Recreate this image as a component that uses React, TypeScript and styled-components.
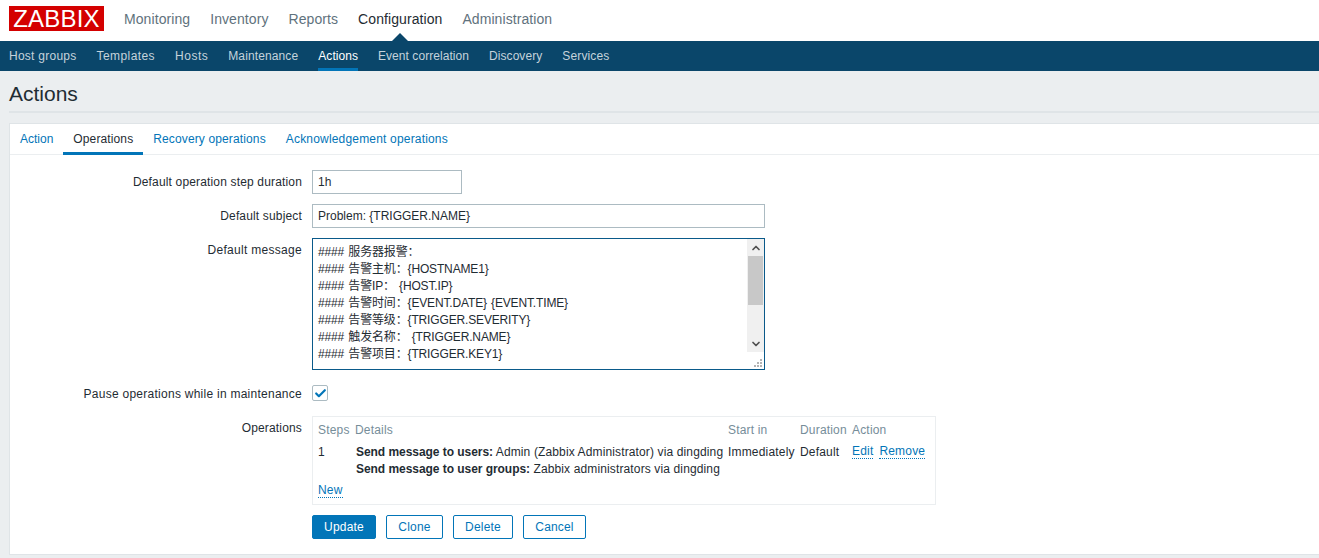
import React from 'react';
import styled, { createGlobalStyle } from 'styled-components';
import { Check, ChevronDown, ChevronUp } from 'lucide-react';

const GlobalStyle = createGlobalStyle`
  html, body {
    margin: 0;
    padding: 0;
    height: 100%;
    overflow: hidden;
    background: #ebeef0;
  }
  * {
    box-sizing: border-box;
  }
  body {
    font-family: "Liberation Sans", Arial, "Noto Sans CJK SC", sans-serif;
    font-size: 12px;
    letter-spacing: 0.18px;
    color: #1f2c33;
  }
`;

const TopBar = styled.header`
  height: 41px;
  background: #fff;
  display: flex;
  align-items: flex-start;
  padding-left: 9px;
`;

const Logo = styled.div`
  width: 95px;
  height: 25px;
  margin-top: 6px;
  background: #d40000;
  color: #fff;
  font-size: 24px;
  line-height: 25px;
  letter-spacing: 0.2px;
  text-align: center;
  overflow: hidden;
`;

const TopMenu = styled.nav`
  display: flex;
  margin-left: 10px;
`;

const TopItem = styled.a<{ $active?: boolean }>`
  position: relative;
  display: block;
  padding: 0 10px;
  height: 41px;
  font-size: 14px;
  line-height: 38px;
  letter-spacing: 0.08px;
  color: ${props => (props.$active ? '#1f2c33' : '#5f727d')};

  ${props => props.$active && `
    &::after {
      content: '';
      position: absolute;
      left: 50%;
      bottom: 0;
      margin-left: -8px;
      border-left: 8px solid transparent;
      border-right: 8px solid transparent;
      border-bottom: 8px solid #0a466a;
    }
  `}
`;

const SubBar = styled.nav`
  height: 30px;
  background: #0a466a;
  display: flex;
  padding-left: 9px;
  gap: 20px;
`;

const SubItem = styled.a<{ $active?: boolean; $track: number }>`
  display: block;
  height: 30px;
  line-height: 30px;
  letter-spacing: ${props => props.$track}px;
  color: ${props => (props.$active ? '#ffffff' : '#c5d3dc')};
  border-bottom: 3px solid ${props => (props.$active ? '#0275b8' : 'transparent')};
`;

const PageTitle = styled.h1`
  margin: 0 0 0 9px;
  height: 42px;
  border-bottom: 2px solid #dfe4e7;
  font-size: 21px;
  font-weight: 400;
  line-height: 45px;
  letter-spacing: 0;
  color: #1f2c33;
`;

const Card = styled.main`
  margin: 10px 0 0 9px;
  height: 432px;
  background: #fff;
  border: 1px solid #dfe4e7;
  border-right: 0;
`;

const Tabs = styled.div`
  height: 31px;
  display: flex;
  border-bottom: 1px solid #ebeef0;
`;

const Tab = styled.a<{ $active?: boolean; $track: number }>`
  display: block;
  height: 31px;
  padding: 0 10px;
  line-height: 30px;
  letter-spacing: ${props => props.$track}px;
  color: ${props => (props.$active ? '#1f2c33' : '#0275b8')};
  border-bottom: 3px solid ${props => (props.$active ? '#0275b8' : 'transparent')};
`;

const Form = styled.div`
  display: flex;
  flex-direction: column;
  padding-top: 15px;
  gap: 10px;
`;

const Row = styled.div`
  display: grid;
  grid-template-columns: 292px 1fr;
  column-gap: 10px;
`;

const Label = styled.label<{ $offset?: number; $track?: number }>`
  text-align: right;
  line-height: 14px;
  padding-top: ${props => props.$offset ?? 5}px;
  letter-spacing: ${props => props.$track ?? 0.16}px;
`;

const TextInput = styled.input<{ $width: number }>`
  display: block;
  width: ${props => props.$width}px;
  height: 24px;
  padding: 0 5px;
  border: 1px solid #acbbc2;
  border-radius: 0;
  outline: 0;
  font: inherit;
  color: #1f2c33;
`;

const MessageBox = styled.div`
  position: relative;
  width: 453px;
  height: 132px;
  display: flex;
  border: 1px solid #0a5a8a;
`;

const MessageArea = styled.textarea`
  flex: 1;
  height: 130px;
  padding: 5px 5px 0;
  border: 0;
  outline: 0;
  resize: none;
  overflow: hidden;
  font: inherit;
  font-family: "Liberation Sans", Arial, "Noto Sans CJK SC", sans-serif;
  line-height: 17px;
  letter-spacing: -0.15px;
  word-spacing: 1px;
  color: #1f2c33;
`;

const ScrollTrack = styled.div`
  width: 17px;
  height: 113px;
  background: #f0f0f0;
  display: flex;
  flex-direction: column;
  align-items: center;
  justify-content: space-between;
  position: relative;
`;

const ScrollArrow = styled.span`
  height: 17px;
  display: flex;
  align-items: center;
  color: #505050;
`;

const ScrollThumb = styled.span`
  position: absolute;
  top: 17px;
  left: 1px;
  width: 15px;
  height: 49px;
  background: #c8c8c8;
`;

const Grip = styled.svg`
  position: absolute;
  right: 1px;
  bottom: 1px;
`;

const Checkbox = styled.span`
  display: flex;
  align-items: center;
  justify-content: center;
  width: 16px;
  height: 16px;
  border: 1px solid #acbbc2;
  border-radius: 2px;
  color: #0275b8;
`;

const CheckRow = styled(Row)`
  margin-top: 5px;
  margin-bottom: 5px;
`;

const OperationsBox = styled.div`
  width: 624px;
  height: 89px;
  padding: 5px;
  border: 1px solid #ebeef0;
`;

const OperationsTable = styled.div`
  display: grid;
  grid-template-columns: 37px 373px 72px 52px 1fr;
  line-height: 17px;
`;

const HeadCell = styled.div`
  color: #768d99;
  padding-bottom: 5px;
`;

const Cell = styled.div`
  white-space: nowrap;
`;

const DetailLine = styled.div`
  padding-left: 1px;
  letter-spacing: 0.13px;
`;

const DetailTitle = styled.b`
  font-weight: 700;
  letter-spacing: -0.05px;
`;

const ActionLinks = styled.div`
  display: flex;
  gap: 6px;
`;

const DottedLink = styled.a`
  color: #0275b8;
  line-height: 14px;
  height: 15px;
  border-bottom: 1px dotted #0275b8;
`;

const NewRow = styled.div`
  display: flex;
  margin-top: 5px;
`;

const Buttons = styled.div`
  display: flex;
  gap: 10px;
`;

const Button = styled.button<{ $primary?: boolean; $width: number }>`
  width: ${props => props.$width}px;
  height: 24px;
  padding: 0;
  border: 1px solid #0275b8;
  border-radius: 2px;
  background: ${props => (props.$primary ? '#0275b8' : '#fff')};
  color: ${props => (props.$primary ? '#fff' : '#0275b8')};
  font: inherit;
  letter-spacing: 0.18px;
`;

const message = [
  '#### 服务器报警:',
  '#### 告警主机:{HOSTNAME1}',
  '#### 告警IP: {HOST.IP}',
  '#### 告警时间:{EVENT.DATE} {EVENT.TIME}',
  '#### 告警等级:{TRIGGER.SEVERITY}',
  '#### 触发名称: {TRIGGER.NAME}',
  '#### 告警项目:{TRIGGER.KEY1}',
].join('\n').replace(/:/g, '\uFF1A');

const topMenu = ['Monitoring', 'Inventory', 'Reports', 'Configuration', 'Administration'];

// tracking per item, the reference has hinted glyph widths
const subMenu = [
  { label: 'Host groups', track: 0.26 },
  { label: 'Templates', track: 0.42 },
  { label: 'Hosts', track: 0.5 },
  { label: 'Maintenance', track: 0.12 },
  { label: 'Actions', track: 0.05 },
  { label: 'Event correlation', track: 0.06 },
  { label: 'Discovery', track: 0.06 },
  { label: 'Services', track: 0.14 },
];

const tabs = [
  { label: 'Action', track: 0 },
  { label: 'Operations', track: 0.12 },
  { label: 'Recovery operations', track: 0.13 },
  { label: 'Acknowledgement operations', track: 0.18 },
];

const buttons = [
  { label: 'Update', width: 64, primary: true },
  { label: 'Clone', width: 57 },
  { label: 'Delete', width: 60 },
  { label: 'Cancel', width: 63 },
];

export default function App() {
  return (
    <>
      <GlobalStyle />
      <TopBar>
        <Logo>ZABBIX</Logo>
        <TopMenu>
          {topMenu.map(item => (
            <TopItem key={item} $active={item === 'Configuration'}>{item}</TopItem>
          ))}
        </TopMenu>
      </TopBar>
      <SubBar>
        {subMenu.map(item => (
          <SubItem key={item.label} $track={item.track} $active={item.label === 'Actions'}>{item.label}</SubItem>
        ))}
      </SubBar>
      <PageTitle>Actions</PageTitle>
      <Card>
        <Tabs>
          {tabs.map(tab => (
            <Tab key={tab.label} $track={tab.track} $active={tab.label === 'Operations'}>{tab.label}</Tab>
          ))}
        </Tabs>
        <Form>
          <Row>
            <Label>Default operation step duration</Label>
            <TextInput $width={150} defaultValue="1h" />
          </Row>
          <Row>
            <Label>Default subject</Label>
            <TextInput $width={453} defaultValue="Problem: {TRIGGER.NAME}" />
          </Row>
          <Row>
            <Label $track={0.3}>Default message</Label>
            <MessageBox>
              <MessageArea defaultValue={message} spellCheck={false} />
              <ScrollTrack>
                <ScrollArrow><ChevronUp size={12} strokeWidth={3.5} /></ScrollArrow>
                <ScrollThumb />
                <ScrollArrow><ChevronDown size={12} strokeWidth={3.5} /></ScrollArrow>
              </ScrollTrack>
              <Grip width="9" height="9" viewBox="0 0 9 9" fill="#b4b4b4">
                <rect x="6" y="0" width="2" height="2" />
                <rect x="3" y="3" width="2" height="2" />
                <rect x="6" y="3" width="2" height="2" />
                <rect x="0" y="6" width="2" height="2" />
                <rect x="3" y="6" width="2" height="2" />
                <rect x="6" y="6" width="2" height="2" />
              </Grip>
            </MessageBox>
          </Row>
          <CheckRow>
            <Label $offset={2} $track={0.26}>Pause operations while in maintenance</Label>
            <Checkbox><Check size={13} strokeWidth={4} /></Checkbox>
          </CheckRow>
          <Row>
            <Label>Operations</Label>
            <OperationsBox>
              <OperationsTable>
                <HeadCell>Steps</HeadCell>
                <HeadCell>Details</HeadCell>
                <HeadCell>Start in</HeadCell>
                <HeadCell>Duration</HeadCell>
                <HeadCell>Action</HeadCell>
                <Cell>1</Cell>
                <Cell>
                  <DetailLine><DetailTitle>Send message to users:</DetailTitle> Admin (Zabbix Administrator) via dingding</DetailLine>
                  <DetailLine><DetailTitle>Send message to user groups:</DetailTitle> Zabbix administrators via dingding</DetailLine>
                </Cell>
                <Cell>Immediately</Cell>
                <Cell>Default</Cell>
                <Cell>
                  <ActionLinks>
                    <DottedLink>Edit</DottedLink>
                    <DottedLink>Remove</DottedLink>
                  </ActionLinks>
                </Cell>
              </OperationsTable>
              <NewRow><DottedLink>New</DottedLink></NewRow>
            </OperationsBox>
          </Row>
          <Row>
            <span />
            <Buttons>
              {buttons.map(button => (
                <Button key={button.label} $width={button.width} $primary={button.primary}>{button.label}</Button>
              ))}
            </Buttons>
          </Row>
        </Form>
      </Card>
    </>
  );
}
